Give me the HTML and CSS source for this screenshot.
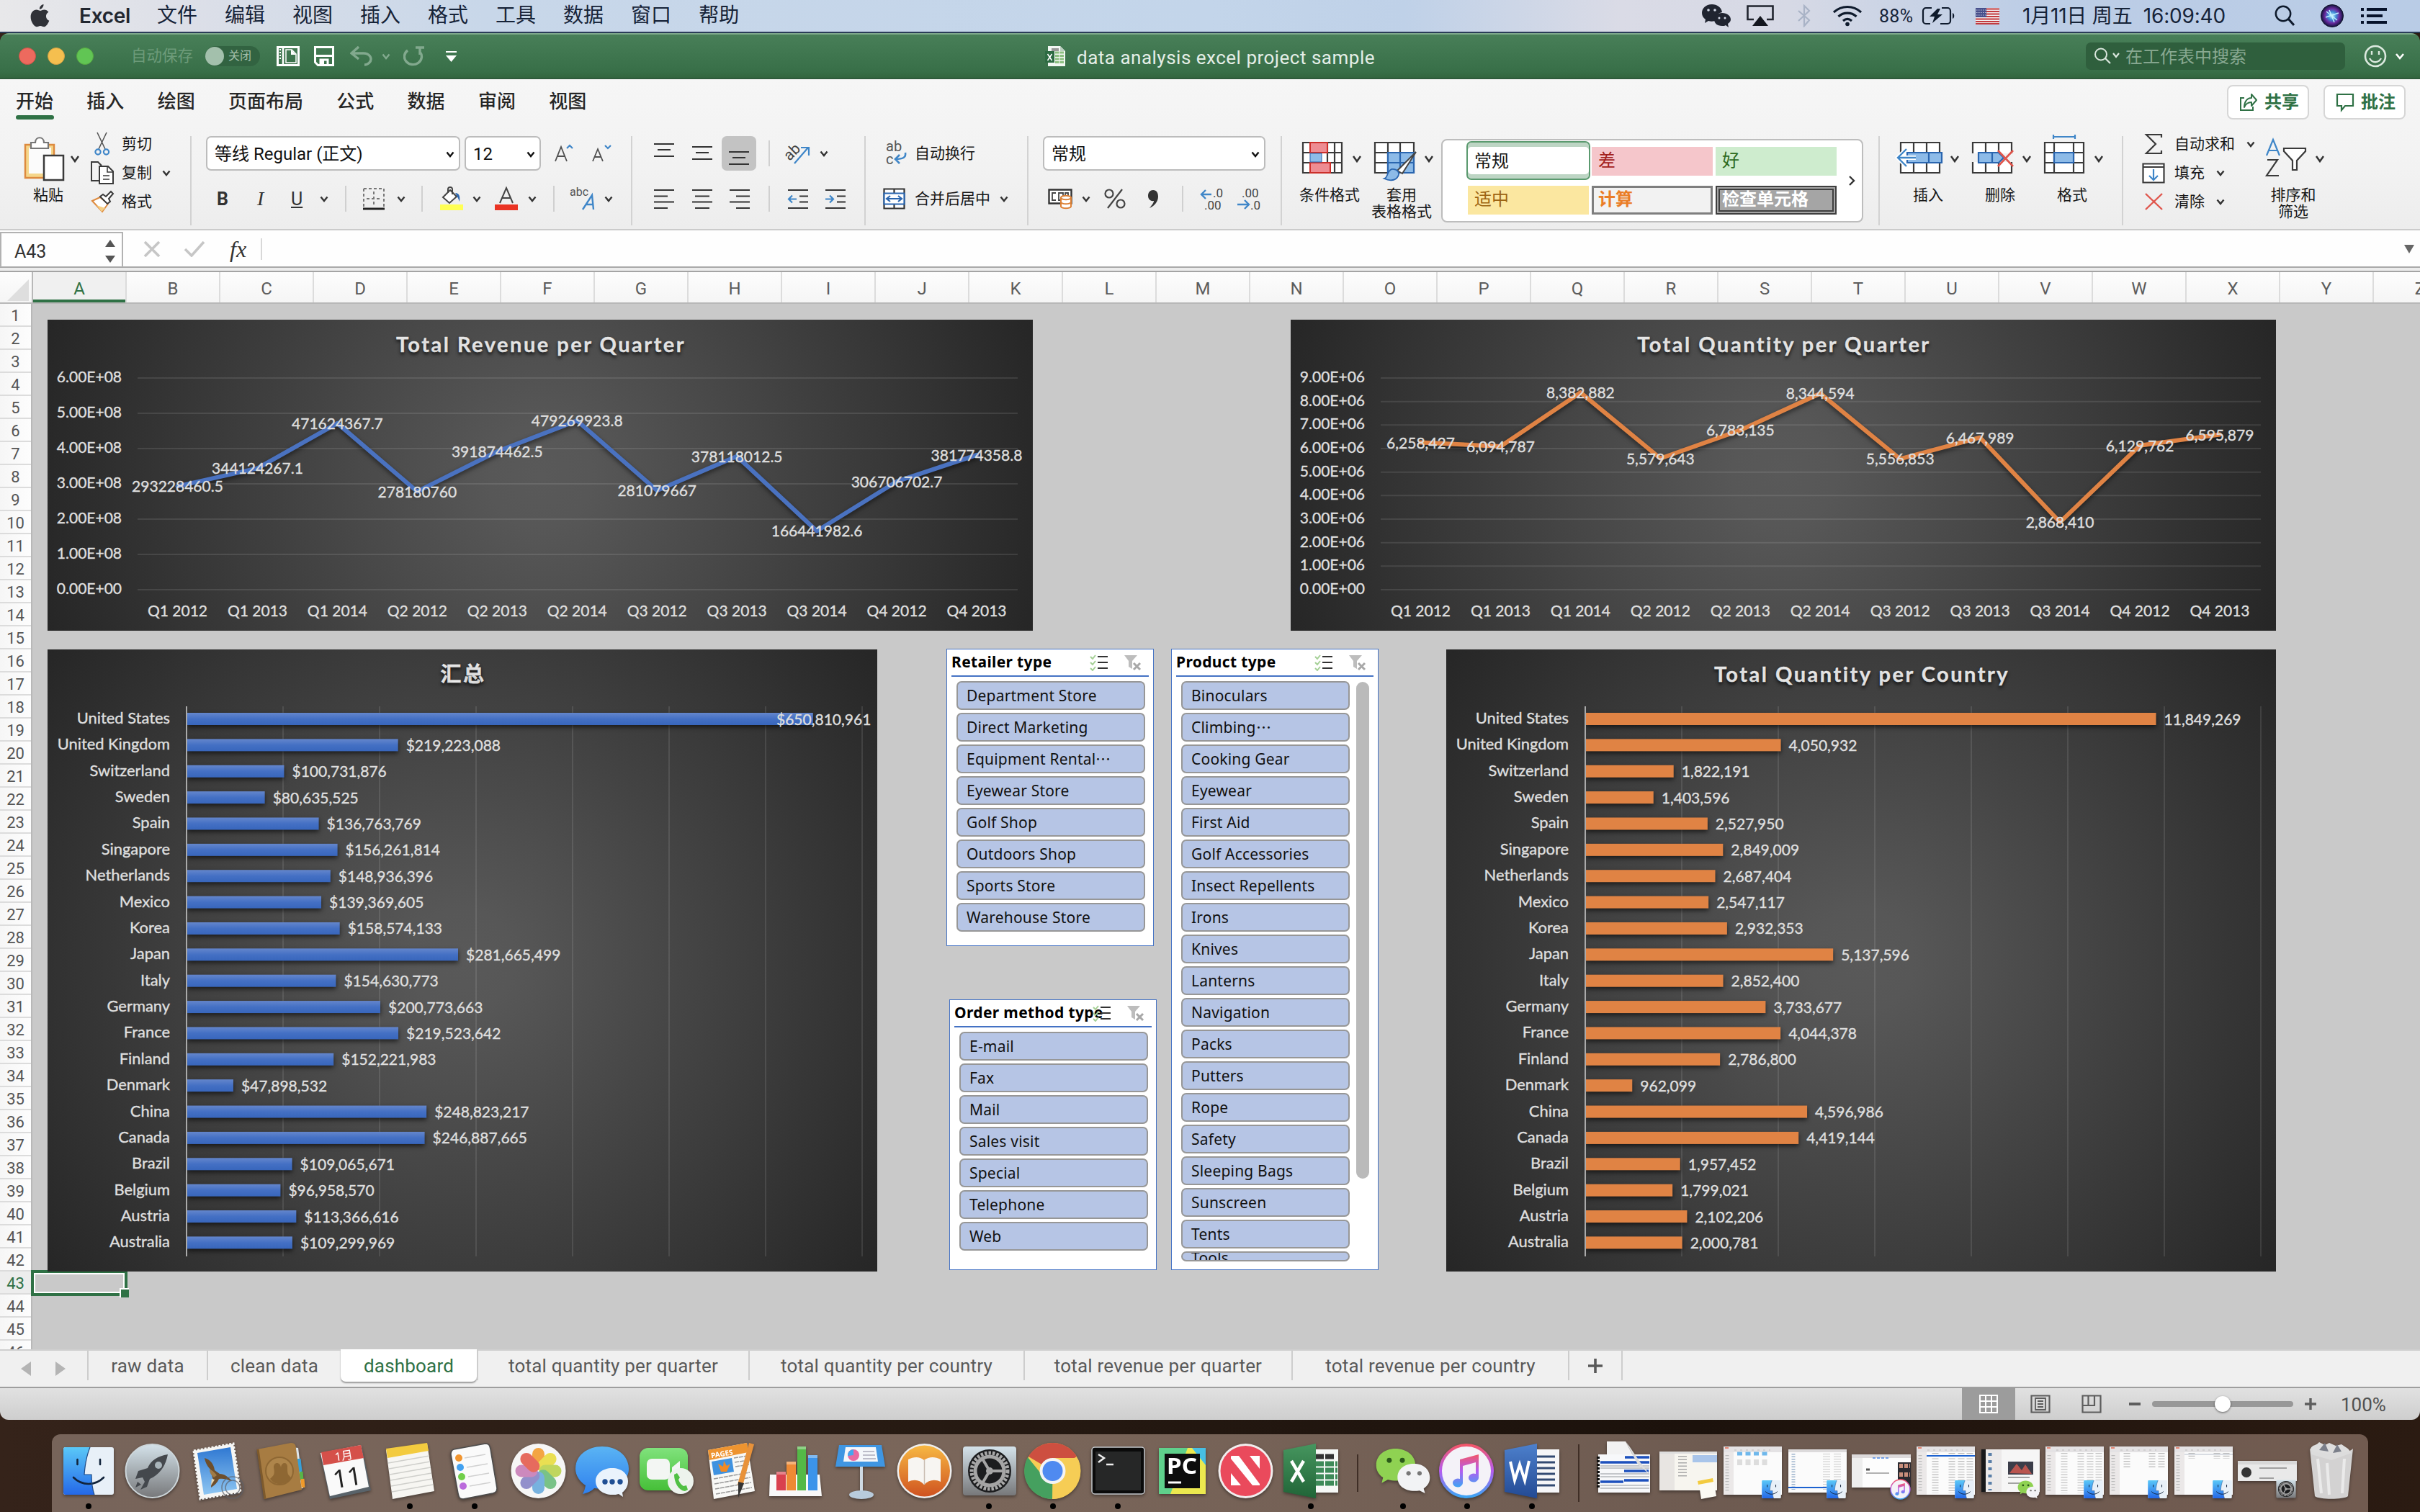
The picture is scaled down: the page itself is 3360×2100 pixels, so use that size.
FILE: index.html
```html
<!DOCTYPE html>
<html lang="zh-CN">
<head>
<meta charset="utf-8">
<title>data analysis excel project sample</title>
<link rel="stylesheet" href="styles.css">
</head>
<body>
<svg class="defs" width="0" height="0">
  <defs>
    <linearGradient id="gFinderL" x1="0" y1="0" x2="0" y2="1"><stop offset="0" stop-color="#5ac8f8"/><stop offset="1" stop-color="#2468e8"/></linearGradient>
    <linearGradient id="gSilver" x1="0" y1="0" x2="0" y2="1"><stop offset="0" stop-color="#d4e2ea"/><stop offset="1" stop-color="#77787a"/></linearGradient>
    <linearGradient id="gSky" x1="0" y1="0" x2="0" y2="1"><stop offset="0" stop-color="#2f78d2"/><stop offset="1" stop-color="#8ec6f2"/></linearGradient>
    <linearGradient id="gMsg" x1="0" y1="0" x2="0" y2="1"><stop offset="0" stop-color="#5ab4f4"/><stop offset="1" stop-color="#2f80ee"/></linearGradient>
    <linearGradient id="gGreen" x1="0" y1="0" x2="0" y2="1"><stop offset="0" stop-color="#80e27c"/><stop offset="1" stop-color="#46bf38"/></linearGradient>
    <linearGradient id="gOrange" x1="0" y1="0" x2="0" y2="1"><stop offset="0" stop-color="#f7b843"/><stop offset="1" stop-color="#cf5220"/></linearGradient>
    <linearGradient id="gNote" x1="0" y1="0" x2="0" y2="1"><stop offset="0" stop-color="#f2566a"/><stop offset=".5" stop-color="#b55cf0"/><stop offset="1" stop-color="#3ca4f4"/></linearGradient>
    <linearGradient id="gWord" x1="0" y1="0" x2="0" y2="1"><stop offset="0" stop-color="#4d80cc"/><stop offset="1" stop-color="#234a94"/></linearGradient>
    <linearGradient id="gXl" x1="0" y1="0" x2="0" y2="1"><stop offset="0" stop-color="#46965f"/><stop offset="1" stop-color="#206437"/></linearGradient>
    <radialGradient id="gSiri"><stop offset="0" stop-color="#d8f6ff"/><stop offset=".35" stop-color="#3d8fd8"/><stop offset=".65" stop-color="#6b2ba0"/><stop offset="1" stop-color="#10133c"/></radialGradient>
    <linearGradient id="gBar" x1="0" y1="0" x2="0" y2="1"><stop offset="0" stop-color="#6486cc"/><stop offset=".5" stop-color="#4470c4"/><stop offset="1" stop-color="#3866bc"/></linearGradient>
  </defs>
  <symbol id="chev" viewBox="0 0 12 9"><path d="M1.500 1.500 6 7l4.500-5.500" fill="none" stroke="currentColor" stroke-width="2.400"/></symbol>
  <symbol id="finder" viewBox="0 0 70 66">
    <rect width="70" height="66" rx="3" fill="#e8f0f8"/><path d="M3 0h34c-5 12-7 25-8 38h10c0 10 1 19 4 28H3a3 3 0 0 1-3-3V3a3 3 0 0 1 3-3z" fill="url(#gFinderL)"/>
    <path d="M19.500 17v7M51 17v7M14 42c12 12 30 12 42 0" fill="none" stroke="#12243c" stroke-width="2.600" stroke-linecap="round"/>
    <path d="M37 0c-5 12-7 25-8 38h10c0 10 1 19 4 28" fill="none" stroke="#1f4a84" stroke-width="1.200"/>
  </symbol>
  <symbol id="gear" viewBox="0 0 76 70">
    <rect x="1" y="1" width="74" height="68" rx="4" fill="url(#gSilver)"/><circle cx="38" cy="35" r="30" fill="#1c1d1f"/>
    <circle cx="38" cy="35" r="25" fill="none" stroke="#a9a9a9" stroke-width="5" stroke-dasharray="3.500 2"/><circle cx="38" cy="35" r="20" fill="none" stroke="#a5a5a5" stroke-width="5"/>
    <circle cx="38" cy="35" r="5" fill="#aaa"/><path d="M38 35H58M38 35 28 18M38 35 28 52" stroke="#a5a5a5" stroke-width="4"/>
  </symbol>
  <symbol id="itunes" viewBox="0 0 78 78">
    <circle cx="39" cy="39" r="36" fill="#f4f2f8" stroke="url(#gNote)" stroke-width="4"/>
    <path d="M30 23 56 16v33a7 6 0 1 1-4-6V27l-18 5v24a7 6 0 1 1-4-6z" fill="url(#gNote)"/>
  </symbol>
  <symbol id="wechat" viewBox="0 0 80 68">
    <path d="M29 1C13 1 1 11 1 25c0 8 4 14 10 18l-2 8 9-5c24 6 40-6 40-21C58 11 45 1 29 1z" fill="#8fd252"/><circle cx="20" cy="18" r="3.600" fill="#2b5a1a"/><circle cx="39" cy="18" r="3.600" fill="#2b5a1a"/>
    <path d="M56 23c-14 0-24 8-24 20 0 14 14 22 32 19l8 4-2-7c6-4 9-9 9-16 0-12-10-20-23-20z" fill="#f2f3f5"/><circle cx="48" cy="37" r="3.200" fill="#777"/><circle cx="64" cy="37" r="3.200" fill="#777"/>
  </symbol>
  <symbol id="listwin" viewBox="0 0 81 67">
    <rect width="81" height="67" fill="#fbfbfb"/><rect width="81" height="8" fill="#e4e2e4"/><rect y="8" width="14" height="59" fill="#ebe8e8"/>
    <path d="M2 2h5" stroke="#e0664e" stroke-width="1.500"/><path d="M15 5h50" stroke="#bbb" stroke-dasharray="3 5"/>
    <path d="M5 12v52" stroke="#bbb" stroke-width="5" stroke-dasharray="1.200 2.800"/>
  </symbol>
</svg>

<header class="menubar">
  <svg class="apple" width="27" height="32" viewBox="0 0 27 32"><path d="M18.500 0c.3 3-2.400 6.800-5.600 6.800C12.500 3.600 15.300.5 18.500 0zM13.700 8.900c1.400 0 3.200-1.500 5.700-1.500 2.300 0 4.600 1.200 6 3.400-5.100 3-4.300 9.900.9 12-1.200 3.300-4 8.400-7 8.400-2 0-2.800-1.300-5.200-1.300-2.500 0-3.400 1.300-5.300 1.300C5.400 31.200.6 24.400.6 17.600c0-6.200 3.900-10 7.900-10 2.300 0 3.900 1.300 5.200 1.300z" fill="#303238"/></svg>
  <b class="app-name">Excel</b>
  <nav class="menus"><span>文件</span><span>编辑</span><span>视图</span><span>插入</span><span>格式</span><span>工具</span><span>数据</span><span>窗口</span><span>帮助</span></nav>
  <div class="tray">
    <svg width="42" height="34" viewBox="0 0 42 34"><path d="M15 1C6 1 1 7 1 13c0 4 2 7 5 9l-1 5 5-3c3 1 6 1 9 0 0-8 5-11 10-12C28 5 22 1 15 1z" fill="#202430"/><path d="M29 13c-7 0-11 4-11 9s4 9 11 9c2 0 4 0 5-1l4 3-1-5c3-2 4-4 4-6 0-5-5-9-12-9z" fill="#202430"/><g fill="#d5dbe8"><circle cx="10" cy="9" r="1.800"/><circle cx="19" cy="9" r="1.800"/><circle cx="25" cy="20" r="1.500"/><circle cx="33" cy="20" r="1.500"/></g></svg>
    <svg width="38" height="30" viewBox="0 0 38 30"><path d="M10 20H1.500V1.500h35V20H28" fill="none" stroke="#20242e" stroke-width="2.600"/><path d="M19 15 30 29H8z" fill="#14171f"/></svg>
    <svg width="18" height="32" viewBox="0 0 18 32"><path d="M1 9l15 13-7 8V2l7 7L1 23" fill="none" stroke="#a9b3c6" stroke-width="2.200"/></svg>
    <svg width="42" height="30" viewBox="0 0 42 30"><g fill="none" stroke="#0e1a2c" stroke-width="3.200"><path d="M2 10c11-10 27-10 38 0M8.500 16c7-6.500 18-6.500 25 0M15 22c4-3.500 8-3.500 12 0"/></g><circle cx="21" cy="26.500" r="2.800" fill="#0e1a2c"/></svg>
    <span class="pct">88%</span>
    <svg width="46" height="26" viewBox="0 0 46 26"><path d="M14 2H6a4 4 0 0 0-4 4v14a4 4 0 0 0 4 4h6M28 2h8a4 4 0 0 1 4 4v14a4 4 0 0 1-4 4H26" fill="none" stroke="#0e1a2c" stroke-width="2.200"/><path d="M43 9v8c3-1 3-7 0-8zM22 3 11 14h7l-3 9L29 11h-7l4-8z" fill="#0e1a2c"/></svg>
    <svg width="33" height="23" viewBox="0 0 33 23"><path fill="#f2eeee" d="M0 0h33v23H0z"/><path d="M0 1.500h33M0 5h33M0 8.500h33M0 12h33M0 15.500h33M0 19h33M0 22h33" stroke="#c23b3f" stroke-width="1.900"/><path fill="#48508c" d="M0 0h15v13H0z"/><path d="M1 3h13M1 6.500h13M1 10h13" stroke="#c9cce0" stroke-dasharray="1.500 1.500"/></svg>
    <span class="clock">1月11日 周五&nbsp; 16:09:40</span>
    <svg width="28" height="30" viewBox="0 0 28 30"><circle cx="12" cy="12" r="10.200" fill="none" stroke="#0e1a2c" stroke-width="2.500"/><path d="m19 19 8 9" stroke="#0e1a2c" stroke-width="3"/></svg>
    <svg width="32" height="32" viewBox="0 0 32 32"><circle cx="16" cy="16" r="15.500" fill="url(#gSiri)" stroke="#101428"/><path d="M7 18l18-6M12 8l7 17M8 10l15 12" stroke="#bff2ff" stroke-width="1.500"/></svg>
    <svg width="36" height="22" viewBox="0 0 36 22"><path d="M0 2h4m4 0h28M0 11h4m4 0h22M0 20h4m4 0h28" stroke="#06122a" stroke-width="4"/></svg>
  </div>
</header>

<main class="window">
  <div class="titlebar">
    <div class="quick">
      <span class="lights"><i class="red"></i><i class="yellow"></i><i class="green"></i></span>
      <span class="autosave">自动保存</span>
      <span class="toggle"><i></i>关闭</span>
      <svg width="32" height="28" viewBox="0 0 32 28"><rect x="1.500" y="1.500" width="29" height="25" fill="none" stroke="#fff" stroke-width="3"/><path d="M9 0v28" stroke="#fff" stroke-width="2.500"/><path d="M5 4v14" stroke="#fff" stroke-width="2" stroke-dasharray="2 2"/><path d="M13 5h8l6 6v12H13z" fill="none" stroke="#fff" stroke-width="1.500"/><path d="M20 5v7h7z" fill="#fff"/></svg>
      <svg width="28" height="28" viewBox="0 0 28 28"><path d="M1.500 1.500h25v25h-21l-4-4z" fill="none" stroke="#fff" stroke-width="3"/><path d="M2 13.500h24M9 27v-8h10v8" fill="none" stroke="#fff" stroke-width="3"/><path fill="#fff" d="M9 20h5v7H9z"/></svg>
      <svg width="32" height="28" viewBox="0 0 32 28"><path d="M12 1 2 10l10 8M3 10h16c6 0 10 4 10 8s-4 8-9 8" fill="none" stroke="#82a98e" stroke-width="3.400"/></svg>
      <svg class="dim" width="12" height="9"><use href="#chev"/></svg>
      <svg width="30" height="29" viewBox="0 0 30 29"><path d="M6 6a12 11 0 1 0 17 2M17 2h12M23 2v10" fill="none" stroke="#82a98e" stroke-width="3.400"/></svg>
      <svg width="15" height="15" viewBox="0 0 15 15"><path d="M0 1h15" stroke="#fff" stroke-width="2"/><path d="M0 6h15l-7.500 9z" fill="#fff"/></svg>
    </div>
    <div class="doc">
      <svg width="29" height="30" viewBox="0 0 29 30"><path d="M4 1h17l7 7v21H4z" fill="#f2f7f3"/><path d="M21 1v7h7z" fill="#bcd0c1"/><path d="M9 4h10v4H9z" fill="#999"/><path d="M14 10h12M14 14.500h12M14 19h12M14 23.500h12" stroke="#8cbf80" stroke-width="3" stroke-dasharray="5.500 1"/><path fill="#2d6b42" d="M0 8h13v16H0z"/><path d="m3.500 12 6 9m0-9-6 9" stroke="#fff" stroke-width="1.600"/></svg>
      <span>data analysis excel project sample</span>
    </div>
    <div class="find">
      <svg width="36" height="24" viewBox="0 0 36 24"><circle cx="10" cy="9.500" r="8" fill="none" stroke="#dbe7de" stroke-width="2"/><path d="m16 15 7 7M27 8l4 5 4-5" fill="none" stroke="#dbe7de" stroke-width="2.200"/></svg>
      <span>在工作表中搜索</span>
    </div>
    <svg class="smile" width="56" height="32" viewBox="0 0 56 32"><circle cx="16" cy="16" r="14" fill="none" stroke="#dce9df" stroke-width="2.600"/><path d="M11 9v5M21 9v5M8 19c4 7 12 7 16 0" fill="none" stroke="#dce9df" stroke-width="2.400"/><path d="m45 13 5 6 5-6" fill="none" stroke="#fff" stroke-width="2.600"/></svg>
  </div>

  <section class="ribbon">
    <div class="tabs">
      <nav><span class="on">开始</span><span>插入</span><span>绘图</span><span>页面布局</span><span>公式</span><span>数据</span><span>审阅</span><span>视图</span></nav>
      <div class="share">
        <button><svg width="26" height="26" viewBox="0 0 26 26"><path d="M7 7H2v17h17v-5" fill="none" stroke="#2f7145" stroke-width="2"/><path d="M17 2l7 8-7 8v-5c-5 0-8 2-10 7 0-8 4-13 10-13z" fill="none" stroke="#2f7145" stroke-width="2" stroke-linejoin="round"/></svg><span>共享</span></button>
        <button><svg width="26" height="26" viewBox="0 0 26 26"><path d="M2 2h22v16H13l-5 6v-6H2z" fill="none" stroke="#2f7145" stroke-width="2.200"/></svg><span>批注</span></button>
      </div>
    </div>

    <div class="groups">
      <div class="group clip">
        <div class="big">
          <svg width="84" height="71" viewBox="0 0 84 71"><path d="M1 12h40v46H1z" fill="#f5d68b" stroke="#dd8a3e" stroke-width="2.500"/><path d="M6 16h31v36H6z" fill="#fbfbfb"/><path d="M9 9h6c0-9 12-9 12 0h6v8H9z" fill="#fff" stroke="#777" stroke-width="2.200"/><path d="M27 27h27v34H27z" fill="#fff" stroke="#3a3a3a" stroke-width="2.500"/><path d="m65 28 5 7 5-7" fill="none" stroke="#333" stroke-width="2.500"/></svg>
          <span>粘贴</span>
        </div>
        <div class="stack">
          <div><svg width="32" height="32" viewBox="0 0 32 32"><path d="M9 0l11 23M22 0 11 23" stroke="#555" stroke-width="1.600"/><g fill="none" stroke="#3f86c8" stroke-width="2.200"><circle cx="10" cy="27" r="3.600"/><circle cx="21.500" cy="27" r="3.600"/></g></svg><span>剪切</span></div>
          <div><svg width="32" height="32" viewBox="0 0 32 32"><path d="M11 27H1V1h9l5 5" fill="none" stroke="#3a3a3a" stroke-width="2"/><path d="M12 7h12l7 7v17H12z" fill="#fff" stroke="#3a3a3a" stroke-width="2"/><path d="M23 7v8h8M17 20h9M17 25h9" fill="none" stroke="#3a3a3a" stroke-width="1.600"/></svg><span>复制</span><svg width="12" height="9"><use href="#chev"/></svg></div>
          <div><svg width="32" height="30" viewBox="0 0 32 30"><path d="M2 14 13 9l11 9-8 11z" fill="#fff" stroke="#dd8a3e" stroke-width="2"/><path d="M8 20l12 4-5 5z" fill="#f5cf85"/><path d="M13 8l4-3 4 3 7-7 3 3-6 7 2 4-4 3z" fill="#fff" stroke="#3a3a3a" stroke-width="2"/></svg><span>格式</span></div>
        </div>
      </div>

      <div class="group font">
        <div class="row r1">
          <div class="select">等线 Regular (正文)<svg width="12" height="9"><use href="#chev"/></svg></div>
          <div class="select size">12<svg width="12" height="9"><use href="#chev"/></svg></div>
          <svg width="28" height="26" viewBox="0 0 28 26"><path d="M1 24 9 4l8 20M4 17h10" fill="none" stroke="#505050" stroke-width="1.800"/><path d="m17 6 4-4 4 4" fill="none" stroke="#3f86c8" stroke-width="2.200"/></svg>
          <svg width="28" height="26" viewBox="0 0 28 26"><path d="M1 24 8 7l7 17M4 18h8" fill="none" stroke="#505050" stroke-width="1.800"/><path d="m18 2 4 4 4-4" fill="none" stroke="#3f86c8" stroke-width="2.200"/></svg>
        </div>
        <div class="row r2">
          <b>B</b><i class="it">I</i><u>U</u><svg width="12" height="9"><use href="#chev"/></svg><i class="sep"></i>
          <svg width="30" height="31" viewBox="0 0 30 31"><path d="M1 1h28v25M1 1v25M15 5v18M5 15h21" fill="none" stroke="#777" stroke-width="2" stroke-dasharray="4 3"/><path d="M0 29h30" stroke="#222" stroke-width="3"/></svg>
          <svg width="12" height="9"><use href="#chev"/></svg><i class="sep"></i>
          <svg width="34" height="34" viewBox="0 0 34 34"><path d="M5 15 15 5l9 9-10 9zM12 9V4c0-4 6-4 6 0v7" fill="#fff" stroke="#444" stroke-width="2"/><path d="M22 9c6 0 7 5 6 12-2-5-3-7-6-12z" fill="#2b66b0"/><path fill="#ffff54" d="M1 25h32v8H1z"/></svg>
          <svg width="12" height="9"><use href="#chev"/></svg>
          <svg width="34" height="34" viewBox="0 0 34 34"><path d="M8 23 17 2l9 21M11 16h12" fill="none" stroke="#444" stroke-width="2"/><path fill="#ea3323" d="M1 25h32v8H1z"/></svg>
          <svg width="12" height="9"><use href="#chev"/></svg><i class="sep"></i>
          <svg width="34" height="36" viewBox="0 0 34 36"><text x="0" y="14" font-size="16" fill="#555">abc</text><path d="M18 33 31 13l2 20M22 26h10" fill="none" stroke="#3f86c8" stroke-width="2.400"/></svg>
          <svg width="12" height="9"><use href="#chev"/></svg>
        </div>
      </div>

      <div class="group align">
        <div class="row r1">
          <svg width="28" height="27" viewBox="0 0 28 27"><path d="M0 4h28M5 12h18M0 21h28" transform="translate(0 -4)" stroke="#333" stroke-width="2.200"/></svg>
          <svg width="28" height="27" viewBox="0 0 28 27"><path d="M0 4h28M5 12h18M0 21h28" stroke="#333" stroke-width="2.200"/></svg>
          <span class="pressed"><svg width="28" height="27" viewBox="0 0 28 27"><path d="M0 4h28M5 12h18M0 21h28" transform="translate(0 7)" stroke="#333" stroke-width="2.200"/></svg></span>
          <i class="sep"></i>
          <svg width="36" height="34" viewBox="0 0 36 34"><text x="-4" y="22" font-size="21" fill="#444" transform="rotate(-45 8 14)">ab</text><path d="M12 31 31 9M21 9h11v11" fill="none" stroke="#3f86c8" stroke-width="2.200"/></svg>
          <svg width="12" height="9"><use href="#chev"/></svg>
        </div>
        <div class="row r2">
          <svg width="28" height="27" viewBox="0 0 28 27"><path d="M0 1h28M0 9.500h19M0 17.500h28M0 26h19" stroke="#333" stroke-width="2"/></svg>
          <svg width="28" height="27" viewBox="0 0 28 27"><path d="M0 1h28M4 9.500h20M0 17.500h28M4 26h20" stroke="#333" stroke-width="2"/></svg>
          <svg width="28" height="27" viewBox="0 0 28 27"><path d="M0 1h28M9 9.500h19M0 17.500h28M9 26h19" stroke="#333" stroke-width="2"/></svg>
          <i class="sep"></i>
          <svg width="28" height="27" viewBox="0 0 28 27"><path d="M0 1h28M16 9.500h12M16 17.500h12M0 26h28" stroke="#333" stroke-width="2"/><path d="M12 13.500H1M6 8.500l-5 5 5 5" fill="none" stroke="#3f86c8" stroke-width="2.200"/></svg>
          <svg width="28" height="27" viewBox="0 0 28 27"><path d="M0 1h28M16 9.500h12M16 17.500h12M0 26h28" stroke="#333" stroke-width="2"/><path d="M0 13.500h11M6 8.500l5 5-5 5" fill="none" stroke="#3f86c8" stroke-width="2.200"/></svg>
        </div>
      </div>

      <div class="group wrap">
        <div class="row r1"><svg width="30" height="34" viewBox="0 0 30 34"><text x="0" y="14" font-size="20" fill="#555">ab</text><text x="0" y="32" font-size="20" fill="#555">c</text><path d="M27 16c1 6-2 9-14 9M19 19l-6 6 6 6" fill="none" stroke="#3f86c8" stroke-width="2.600"/></svg><span>自动换行</span></div>
        <div class="row r2"><svg width="31" height="30" viewBox="0 0 31 30"><path d="M1.500 1.500h28v27h-28zM15.500 1v6M15.500 23v6" fill="#fff" stroke="#333" stroke-width="2.200"/><path d="M1.500 7.500h28v15h-28z" fill="#fff" stroke="#2a66b0" stroke-width="2.200"/><path d="M5 15h21M10 11l-5 4 5 4M21 11l5 4-5 4" fill="none" stroke="#2a66b0" stroke-width="2.200"/></svg><span>合并后居中</span><svg width="12" height="9"><use href="#chev"/></svg></div>
      </div>

      <div class="group num">
        <div class="row r1"><div class="select">常规<svg width="12" height="9"><use href="#chev"/></svg></div></div>
        <div class="row r2">
          <svg width="34" height="28" viewBox="0 0 34 28"><path d="M1.500 1.500h31v19h-31z" fill="#fff" stroke="#333" stroke-width="2.400"/><path d="M11 6H6v10h5M15 6h6v10h-6zM24 16V6h4v4" fill="none" stroke="#444" stroke-width="1.800"/><path d="M18 12c2-3 12-3 14 0v13c-2 3-12 3-14 0z" fill="#fff" stroke="#dd8034" stroke-width="2"/><path d="M18 13c2 3 12 3 14 0M18 19c2 3 12 3 14 0" fill="none" stroke="#dd8034" stroke-width="2"/></svg>
          <svg width="12" height="9"><use href="#chev"/></svg>
          <svg width="30" height="30" viewBox="0 0 30 30"><g fill="none" stroke="#444" stroke-width="2.200"><circle cx="7" cy="8" r="5.500"/><circle cx="23" cy="22" r="5.500"/><path d="M25 2 5 28"/></g></svg>
          <svg width="16" height="27" viewBox="0 0 16 27"><path d="M7 1c5 0 7 4 7 9 0 7-5 13-12 16 4-5 6-8 6-10C3 17 0 13 0 9c0-5 3-8 7-8z" fill="#333"/></svg>
          <i class="sep"></i>
          <svg width="32" height="32" viewBox="0 0 32 32"><text x="18" y="14" font-size="17" fill="#444">.0</text><text x="6" y="31" font-size="17" fill="#444">.00</text><path d="M16 10H2M8 4l-6 6 6 6" fill="none" stroke="#3f86c8" stroke-width="2.400"/></svg>
          <svg width="32" height="32" viewBox="0 0 32 32"><text x="6" y="14" font-size="17" fill="#444">.00</text><text x="18" y="31" font-size="17" fill="#444">.0</text><path d="M0 24h15M10 18l6 6-6 6" fill="none" stroke="#3f86c8" stroke-width="2.400"/></svg>
        </div>
      </div>

      <div class="group styles">
        <div class="big w100"><svg width="100" height="71" viewBox="0 0 100 71"><path d="M13 9h54v42H13zM24 9v42M47 9v42M57 9v42M13 23h54M13 37h54" fill="#fff" stroke="#3a3a3a" stroke-width="2.200"/><path d="M23 9h24v14H23zM23 37h28v14H23z" fill="#ee8c92" stroke="#cc2f2a" stroke-width="2"/><path d="M23 24h16v12H23z" fill="#8dbbe8" stroke="#2a66b0"/><path d="m83 28 5 7 5-7" fill="none" stroke="#333" stroke-width="2.500"/></svg><span>条件格式</span></div>
        <div class="big w100"><svg width="100" height="71" viewBox="0 0 100 71"><path d="M13 9h54v42H13zM31 9v42M48 9v42M13 23h54M13 37h54" fill="#fff" stroke="#3a3a3a" stroke-width="2.200"/><path d="M31 23h36v28H31zM48 23v28M31 37h36" fill="#8dbbe8" stroke="#2a66b0" stroke-width="2.200"/><path d="M70 22 44 48l7 4z" fill="#fff" stroke="#444" stroke-width="2"/><path d="M26 59c5-1 3-9 10-13 8-1 12 5 9 10-4 7-13 6-19 3z" fill="#8dbbe8" stroke="#2a66b0" stroke-width="1.800"/><path d="m83 28 5 7 5-7" fill="none" stroke="#333" stroke-width="2.500"/></svg><span>套用<br>表格格式</span></div>
        <div class="gallery">
          <div class="cells"><span class="normal">常规</span><span class="bad">差</span><span class="good">好</span><span class="neutral">适中</span><span class="calc">计算</span><span class="check">检查单元格</span></div>
          <svg width="10" height="14" viewBox="0 0 10 14"><path d="m2 1 6 6-6 6" fill="none" stroke="#333" stroke-width="2.400"/></svg>
        </div>
      </div>

      <div class="group cellops">
        <div class="big"><svg width="90" height="71" viewBox="0 0 90 71"><path d="M7 9h54v42H7zM25 9v42M43 9v42" fill="#fff" stroke="#3a3a3a" stroke-width="2.200"/><path d="M16 23h48v14H16zM46 23v14" fill="#8dbbe8" stroke="#2a66b0" stroke-width="2.200"/><path d="M28 30H3M15 18 3 30l12 12" fill="none" stroke="#fff" stroke-width="6"/><path d="M28 30H3M15 18 3 30l12 12" fill="none" stroke="#3f86c8" stroke-width="2.400"/><path d="m77 28 5 7 5-7" fill="none" stroke="#333" stroke-width="2.500"/></svg><span>插入</span></div>
        <div class="big"><svg width="90" height="71" viewBox="0 0 90 71"><path d="M7 9h54v42H7zM25 9v42M43 9v42" fill="#fff" stroke="#3a3a3a" stroke-width="2.200"/><path d="M5 24h58v12H5z" fill="#f1f1f1"/><path d="M15 23h28l7 7-7 7H15zM34 23v14" fill="#8dbbe8" stroke="#2a66b0" stroke-width="2.200"/><path d="m42 20 21 22M63 20 42 42" stroke="#e0554c" stroke-width="2.600"/><path d="m77 28 5 7 5-7" fill="none" stroke="#333" stroke-width="2.500"/></svg><span>删除</span></div>
        <div class="big"><svg width="90" height="71" viewBox="0 0 90 71"><path d="M7 9h54v42H7zM20 9v42M47 9v42M7 23h54M7 37h54" fill="#fff" stroke="#3a3a3a" stroke-width="2.200"/><path d="M20 23h27v14H20z" fill="#8dbbe8" stroke="#2a66b0" stroke-width="2.200"/><path d="M19 1h30M19-2v6M49-2v6" stroke="#3f86c8" stroke-width="2.200"/><path d="m77 28 5 7 5-7" fill="none" stroke="#333" stroke-width="2.500"/></svg><span>格式</span></div>
      </div>

      <div class="group edit">
        <div class="stack">
          <div><svg width="32" height="30" viewBox="0 0 32 30"><path d="M27 6V2H6l13 13L6 28h21v-4" fill="none" stroke="#3a3a3a" stroke-width="2.200"/></svg><span>自动求和</span><svg width="12" height="9"><use href="#chev"/></svg></div>
          <div><svg width="32" height="29" viewBox="0 0 32 29"><path d="M1.500 1.500h29v26h-29zM1 6h30" fill="#fff" stroke="#3a3a3a" stroke-width="2.200"/><path d="M16 9v15M10 18l6 6 6-6" fill="none" stroke="#3f86c8" stroke-width="2.200"/></svg><span>填充</span><svg width="12" height="9"><use href="#chev"/></svg></div>
          <div><svg width="32" height="26" viewBox="0 0 32 26"><path d="m5 2 23 22M28 2 5 24" stroke="#e0554c" stroke-width="2.400"/></svg><span>清除</span><svg width="12" height="9"><use href="#chev"/></svg></div>
        </div>
        <div class="big"><svg width="90" height="71" viewBox="0 0 90 71"><path d="M8 27 17 5l9 22M11 20h12" fill="none" stroke="#3f86c8" stroke-width="2.200"/><path d="M9 33h14L8 55h17" fill="none" stroke="#3a3a3a" stroke-width="2.200"/><path d="M32 17h30v4L50 34v13h-6V34L32 21z" fill="#fff" stroke="#3a3a3a" stroke-width="2.200"/><path d="m77 28 5 7 5-7" fill="none" stroke="#333" stroke-width="2.500"/></svg><span>排序和<br>筛选</span></div>
      </div>
    </div>
  </section>

  <div class="formula">
    <div class="namebox">A43<svg width="16" height="34" viewBox="0 0 16 34"><path d="M1 11 8 1l7 10zM1 23h14L8 33z" fill="#555"/></svg></div>
    <svg width="24" height="22" viewBox="0 0 24 22"><path d="m2 1 20 20M22 1 2 21" stroke="#c6c6c6" stroke-width="3.600"/></svg>
    <svg width="30" height="22" viewBox="0 0 30 22"><path d="m2 11 9 9L28 1" fill="none" stroke="#c6c6c6" stroke-width="3.600"/></svg>
    <i class="fx">fx</i><i class="bar"></i>
    <svg class="drop" width="14" height="12" viewBox="0 0 14 12"><path d="M0 0h14L7 12z" fill="#666"/></svg>
  </div>

  <div class="colheads" id="cols"><span class="corner"><svg width="30" height="30" viewBox="0 0 30 30"><path d="M30 0v30H0z" fill="#dedede"/></svg></span></div>

  <div class="sheet">
    <div class="rowheads" id="rows"></div>
    <div class="canvas" id="canvas">
      <div class="cursor"></div>
      <svg class="chart" id="revQuarter" width="1368" height="432"></svg>
      <svg class="chart" id="qtyQuarter" width="1368" height="432"></svg>
      <svg class="chart" id="revCountry" width="1152" height="864"></svg>
      <svg class="chart" id="qtyCountry" width="1152" height="864"></svg>
      <section class="slicer" id="retailer"></section>
      <section class="slicer" id="order"></section>
      <section class="slicer" id="product"></section>
    </div>
  </div>

  <div class="sheettabs">
    <svg class="arrows" width="62" height="20" viewBox="0 0 62 20"><path d="M14 0v20L0 10zM48 0v20l14-10z" fill="#b4b4b4"/></svg>
    <span style="width:166px">raw data</span><span style="width:186px">clean data</span><span class="on" style="width:189px">dashboard</span><span style="width:377px">total quantity per quarter</span><span style="width:382px">total quantity per country</span><span style="width:372px">total revenue per quarter</span><span style="width:384px">total revenue per country</span>
    <span style="width:76px"><svg width="20" height="20" viewBox="0 0 20 20"><path d="M10 0v20M0 10h20" stroke="#595959" stroke-width="3.600"/></svg></span>
  </div>

  <footer class="status">
    <span class="view on"><svg width="26" height="26" viewBox="0 0 26 26"><path d="M1 1h24v24H1zM9 1v24M17 1v24M1 9h24M1 17h24" fill="none" stroke="#fff" stroke-width="2"/></svg></span>
    <svg width="28" height="26" viewBox="0 0 28 26"><path d="M1.500 1.500h25v23h-25z" fill="none" stroke="#5d5d5d" stroke-width="2.200"/><path d="M7 5h14v16H7zM10 9h8M10 13h8M10 17h8" fill="none" stroke="#5d5d5d" stroke-width="1.800"/></svg>
    <svg width="28" height="26" viewBox="0 0 28 26"><path d="M1.500 1.500h25v23h-25zM1 15h17V1M9.500 1v14" fill="none" stroke="#5d5d5d" stroke-width="2.200"/></svg>
    <i class="minus"></i><span class="zoom"><i></i></span>
    <svg width="16" height="16" viewBox="0 0 16 16"><path d="M8 0v16M0 8h16" stroke="#5d5d5d" stroke-width="3.400"/></svg>
    <span class="pct">100%</span>
  </footer>
</main>

<div class="dock">
  <div class="app run"><svg viewBox="0 0 89 108"><use href="#finder" x="10" y="18" width="70" height="66"/></svg></div>
  <div class="app"><svg viewBox="0 0 89 108"><circle cx="44.500" cy="51" r="37" fill="url(#gSilver)" stroke="#cdd6da" stroke-width="2"/><path d="M66 28c-14 2-24 9-28 19l-13 4-4 11 10-2 3 6-6 11 9-4 4-11c14-6 22-18 25-34zM24 66l-3 8 8-4z" fill="#44484d"/><circle cx="53" cy="43" r="5" fill="#a8b4ba"/></svg></div>
  <div class="app"><svg viewBox="0 0 89 108"><path d="M12 23 67 13l10 67-56 10z" fill="#f6f6f4" stroke="#f6f6f4" stroke-width="3" stroke-dasharray="3 2"/><path d="m17 26 46-8 9 58-46 8z" fill="url(#gSky)"/><path d="M27 33c9 3 13 9 14 17l7 5c6 0 12 4 17 10-8-3-13-4-18-3-2 5-6 9-11 12 0-4 1-8 3-11-2-5-3-9-2-12-5-5-9-11-10-18z" fill="#6e4f2c"/><path d="M34 49c4 1 7 4 10 8l-4 3c-4-3-6-7-6-11z" fill="#a07b46"/><path d="M37 62l4 1-5 8z" fill="#e9d9b4"/><circle cx="66" cy="74" r="15" fill="none" stroke="#5c5f68" stroke-width="1.500" opacity=".7"/><circle cx="66" cy="74" r="10" fill="none" stroke="#5c5f68" stroke-width="1.500" opacity=".7"/></svg></div>
  <div class="app"><svg viewBox="0 0 89 108"><path d="M60 18l8 1 7 56-10 1z" fill="#dfe6ea"/><path d="M69 34l2 18" stroke="#38a0d8" stroke-width="5"/><path d="M72 52l1 12" stroke="#58b548" stroke-width="5"/><path d="M74 62l1 12" stroke="#f09a2a" stroke-width="5"/><path d="M11 21 58 12c6 0 7 4 7 8l8 57-52 13z" fill="#a77c42"/><path d="M12 21 22 90" stroke="#7e5a2c" stroke-width="3"/><circle cx="42" cy="51" r="19" fill="#ae854b" stroke="#8e6733" stroke-width="2"/><path d="M29 62c5-5 7-6 5-16 0-8 9-8 10 0 1-8 10-8 9 1 0 9 1 9 5 13-7 12-22 12-29 2z" fill="#8e6733"/></svg></div>
  <div class="app"><svg viewBox="0 0 89 108"><path d="M10 30 68 20l12 58-57 12z" fill="#59636a"/><path d="M10 26 66 15l11 58-54 13z" fill="#fafafa"/><path d="M11 25 66 15l4 18-56 10z" fill="#d5504a"/><text x="30" y="36" font-size="16" fill="#fff" transform="rotate(-9 40 32)">1月</text><text x="27" y="73" font-size="35" fill="#222" transform="rotate(-9 44 60)">11</text></svg></div>
  <div class="app run"><svg viewBox="0 0 89 108"><path d="m12 22 57-9 10 66-58 11z" fill="#f7f6f2"/><path d="m12 20 57-8 2 11-57 10z" fill="#f3cb3f"/><path d="m15 40 57-10M16 48l57-10M17 56l57-10M18 64l57-10M19 72l57-10M20 80l57-10" stroke="#cfcfcb" stroke-width="1.500"/></svg></div>
  <div class="app run"><svg viewBox="0 0 89 108"><path d="M16 21 60 13c6 0 6 4 7 8l9 54c0 5-3 6-6 7l-41 8c-5 0-6-3-7-8l-10-54c0-4 1-6 4-7z" fill="#fafafa" stroke="#4c4c4c" stroke-width="1.500"/><path d="m31 33 29-5M34 46l29-5M36 59l29-5M38 72l29-5" stroke="#d0d0d0" stroke-width="1.500"/><circle cx="23" cy="33" r="5" fill="#f1952f"/><circle cx="25" cy="46" r="5" fill="#43a1f0"/><circle cx="27" cy="59" r="5" fill="#71cf4a"/><circle cx="29" cy="72" r="5" fill="#bb6bdc"/></svg></div>
  <div class="app"><svg viewBox="0 0 89 108"><circle cx="44.500" cy="51" r="38" fill="#f6f6f6"/><g opacity=".88"><rect x="36" y="19" width="17" height="31" rx="8.500" fill="#f39a2b"/><rect x="36" y="19" width="17" height="31" rx="8.500" fill="#e9dc3c" transform="rotate(45 44.500 51)"/><rect x="36" y="19" width="17" height="31" rx="8.500" fill="#b9d24a" transform="rotate(90 44.500 51)"/><rect x="36" y="19" width="17" height="31" rx="8.500" fill="#68bb78" transform="rotate(135 44.500 51)"/><rect x="36" y="19" width="17" height="31" rx="8.500" fill="#66a9dc" transform="rotate(180 44.500 51)"/><rect x="36" y="19" width="17" height="31" rx="8.500" fill="#8583c6" transform="rotate(225 44.500 51)"/><rect x="36" y="19" width="17" height="31" rx="8.500" fill="#c77bb6" transform="rotate(270 44.500 51)"/><rect x="36" y="19" width="17" height="31" rx="8.500" fill="#e4584a" transform="rotate(315 44.500 51)"/></g></svg></div>
  <div class="app"><svg viewBox="0 0 89 108"><path d="M44 17C23 17 7 30 7 48c0 9 6 18 14 23-1 6-2 8-4 12 8-2 12-4 16-8 29 4 48-9 48-27S65 17 44 17z" fill="url(#gMsg)"/><path d="M58 47c-13 0-23 8-23 18 0 11 10 19 23 19 4 0 6 0 9-1l6 4-1-6c5-4 8-9 8-16 0-10-9-18-22-18z" fill="#eaf3fc"/><g fill="#1f4f94"><circle cx="48" cy="66" r="3.700"/><circle cx="58" cy="66" r="3.700"/><circle cx="69" cy="66" r="3.700"/></g></svg></div>
  <div class="app"><svg viewBox="0 0 89 108"><rect x="6" y="19" width="67" height="59" rx="12" fill="url(#gGreen)"/><rect x="16" y="34" width="32" height="29" rx="7" fill="#f3f6f3"/><path d="m51 46 11-9v22l-11-6z" fill="#f3f6f3"/><circle cx="63" cy="65" r="18" fill="#edf3ed"/><path d="M54 56l4-2 4 6-2 3c2 5 4 7 7 9l4-1 2 6-4 2c-9-1-15-12-15-23z" fill="#50c043"/></svg></div>
  <div class="app"><svg viewBox="0 0 89 108"><path d="M12 22 66 12l11 67-57 11z" fill="#f8f8f6"/><path d="m12 22 54-10 2 13-54 11z" fill="#ee9430"/><text x="16" y="31" font-size="10" font-weight="bold" fill="#fff" transform="rotate(-9 30 28)">PAGES</text><path d="m17 38 28-5 3 19-28 5z" fill="#3f92e0"/><path d="M30 52l-4-11 7 4 1-8 4 7 5-3-5 11z" fill="#f28a24"/><path d="m48 33 19-3M49 39l19-3M50 45l19-3M20 62l50-9M21 69l50-9M22 76l50-9M23 83l50-9" stroke="#999" stroke-width="1.500" stroke-dasharray="6 1"/><path d="m69 12 7 2-16 58-7-2z" fill="#e8923a"/><path d="m54 66 8 2-8 20z" fill="#333"/></svg></div>
  <div class="app"><svg viewBox="0 0 89 108"><path d="M9 56h69l3 30H8z" fill="#f8f8f8"/><path d="M18 52h13v26H18z" fill="#d9414e"/><path d="M32 38h13v40H32z" fill="#ee8a34"/><path d="M47 17h12v61H47z" fill="#54b947"/><path d="M62 29h13v49H62z" fill="#3c94ea"/><path d="M18 52h13v4H18zM32 38h13v4H32zM47 17h12v4H47zM62 29h13v4H62z" fill="#fff" opacity=".35"/></svg></div>
  <div class="app"><svg viewBox="0 0 89 108"><path d="M15 15h59l5 30H10z" fill="#3f96e2"/><path d="M24 18h42l3 20H21z" fill="#f4f7fa"/><circle cx="35" cy="29" r="8" fill="#e86aa0"/><path d="M35 29V21a8 8 0 0 0-8 9z" fill="#45a6ee"/><path d="M48 24h16M48 29h17M48 34h18" stroke="#aab" stroke-width="1.500"/><path d="M44 45h4v40h-4z" fill="#cfdbe4"/><ellipse cx="46" cy="84" rx="17" ry="6" fill="#b8cbdc"/></svg></div>
  <div class="app"><svg viewBox="0 0 89 108"><circle cx="44.500" cy="51" r="38" fill="#eee"/><circle cx="44.500" cy="51" r="35.500" fill="url(#gOrange)"/><path d="M44 36c-6-5-14-5-22-1v31c8-4 16-3 22 4 7-7 15-8 23-4V35c-8-4-16-4-23 1z" fill="#f7f5f2"/><path d="M44.500 36v34" stroke="#c9bdb2" stroke-width="1.500"/></svg></div>
  <div class="app run"><svg viewBox="0 0 89 108"><use href="#gear" x="8" y="16" width="76" height="70"/></svg></div>
  <div class="app run"><svg viewBox="0 0 89 108"><circle cx="44.500" cy="51" r="39" fill="#f6cd55"/><path d="M44.500 51 11 31a39 39 0 0 1 67 0z" fill="#cd4f40"/><path d="M10 32a39 39 0 0 0 34 58l17-29-30-3z" fill="#45a05f"/><path d="M44.500 51V33h34A39 39 0 0 1 44 90z" fill="#f6cd55"/><circle cx="44.500" cy="51" r="18" fill="#f4f4f4"/><circle cx="44.500" cy="51" r="14" fill="#4f8af0"/></svg></div>
  <div class="app run"><svg viewBox="0 0 89 108"><rect x="9" y="18" width="73" height="65" rx="4" fill="#0a0a0a" stroke="#c4c8cc" stroke-width="1.500"/><path d="M14 24h63v54H14z" fill="#262727"/><path d="m18 28 8 5-8 6M29 42h10" fill="none" stroke="#eee" stroke-width="2.500"/></svg></div>
  <div class="app"><svg viewBox="0 0 89 108"><path d="M13 19h65v64H13z" fill="#ece94f"/><path d="M13 19h40L29 83H13z" fill="#5fd18c"/><path d="M59 19h19v24z" fill="#47bfe4"/><path d="M21 27h49v48H21z" fill="#0d0d0d"/><text x="24" y="55" font-size="30" font-weight="bold" fill="#fff" textLength="42" lengthAdjust="spacingAndGlyphs">PC</text><path d="M26 67h18" stroke="#fff" stroke-width="3"/></svg></div>
  <div class="app"><svg viewBox="0 0 89 108"><circle cx="44.500" cy="51" r="38" fill="#f1eeee"/><circle cx="44.500" cy="51" r="35" fill="#ea4a5c"/><path d="M24 31c0-1 1-1 2-1h9l29 39v2h-10L24 34zM50 30h14v18zM24 54v17h14z" fill="#fff"/></svg></div>
  <div class="app run"><svg viewBox="0 0 89 108"><path d="M47 21h36v60H47z" fill="#f6f8f6"/><path d="M51 41h31M51 50h31M51 59h31M51 68h31" stroke="#3d8a58" stroke-width="7" stroke-dasharray="12 2"/><path d="M51 31h28" stroke="#333" stroke-width="7" stroke-dasharray="12 2"/><path d="M7 22 52 13v76L7 80z" fill="url(#gXl)"/><path d="m18 37 17 29M35 37 18 66" stroke="#fff" stroke-width="4.500"/></svg></div>
  <i class="rule short"></i>
  <div class="app run"><svg viewBox="0 0 89 108"><use href="#wechat" x="5" y="19" width="80" height="65"/></svg></div>
  <div class="app run"><svg viewBox="0 0 89 108"><use href="#itunes" x="5" y="12" width="78" height="78"/></svg></div>
  <div class="app run"><svg viewBox="0 0 89 108"><path d="M47 21h36v60H47z" fill="#f6f6f8"/><path d="M50 31h27M50 39h27M50 47h27M50 55h27M50 63h27M50 71h27" stroke="#334a72" stroke-width="3"/><path d="M7 22 52 13v76L7 80z" fill="url(#gWord)"/><path d="m15 38 6 26 7-22 7 22 6-27" fill="none" stroke="#fff" stroke-width="4"/></svg></div>
  <i class="rule"></i>
  <div class="app"><svg viewBox="0 0 89 108"><path d="M20 10h26l18 34H20z" fill="#f2f2f2"/><path d="M8 28h72v53H8z" fill="#f7f8fa"/><path d="M8 31v45" stroke="#111" stroke-width="4" stroke-dasharray="3 2"/><path d="M11 39h68M45 32h34M11 66h32M44 51h34M44 64h34" stroke="#1d50bd" stroke-width="3.500"/><path d="M11 44h68M11 47h68M11 55h68M11 59h68M11 71h68M11 75h68" stroke="#b4b6bc" stroke-width="1.600"/><path d="M46 10c8 9 18 28 34 46l-17-14z" fill="#dcdcdc"/></svg></div>
  <div class="app"><svg viewBox="0 0 89 108"><path d="M4 24h80v54H4z" fill="#f7f5ef"/><path d="M4 24h80v3H4z" fill="#ddd"/><path d="M4 27h21v51H4z" fill="#e8e5e2"/><path d="M50 29h34v10H50z" fill="#a9c5ea"/><path d="M36 30v30" stroke="#aaa" stroke-width="12" stroke-dasharray="1.500 3"/><path d="m58 64 21-3 4 25-21 4z" fill="#fbfaf4"/><path d="m57 65 21-4 1 5-21 4z" fill="#f3cb3f"/></svg></div>
  <div class="app"><svg viewBox="0 0 89 108"><use href="#listwin" x="4" y="17" width="81" height="67"/><path d="M23 27h44" stroke="#6fb8ec" stroke-width="5" stroke-dasharray="7 4.500"/><path d="M23 39h44" stroke="#ddd" stroke-width="8" stroke-dasharray="7 4.500"/><use href="#finder" x="57" y="64" width="27" height="25"/></svg></div>
  <div class="app"><svg viewBox="0 0 89 108"><path d="M4 21h81v60H4z" fill="#fbfbfb"/><path d="M4 21h81v4H4z" fill="#dcdadb"/><path d="M11 27v50" stroke="#9db4cc" stroke-width="5" stroke-dasharray="1.500 2"/><path d="M57 27v50M72 27v50" stroke="#ccc" stroke-width="10" stroke-dasharray="1 2.500"/><path d="M4 74h55" stroke="#1d62d0" stroke-width="2"/><use href="#finder" x="57" y="64" width="27" height="25"/></svg></div>
  <div class="app"><svg viewBox="0 0 89 108"><path d="M3 28h82v46H3z" fill="#fdfdfd"/><path d="M3 28h82v5H3z" fill="#dddadb"/><path d="M3 33h15v41H3z" fill="#eee"/><path d="M32 33h24" stroke="#4a86e8" stroke-width="1.500" stroke-dasharray="4 2"/><path d="M23 49h5" stroke="#555" stroke-width="3"/><path d="M23 54h32" stroke="#999" stroke-width="1.500"/><path d="M67 39h18v35H67z" fill="#2b2a30"/><path d="M69 44h15M69 56h15" stroke="#c98f7c" stroke-width="6" stroke-dasharray="5 2"/><use href="#itunes" x="56" y="62" width="29" height="29"/></svg></div>
  <div class="app"><svg viewBox="0 0 89 108"><use href="#listwin" x="4" y="17" width="81" height="67"/><path d="M30 26v56M53 26v56M66 26v56M78 26v56" stroke="#bbb" stroke-width="9" stroke-dasharray="1.200 2.500"/><path d="M18 30h67" stroke="#1d62d0" stroke-width="2"/><use href="#finder" x="57" y="64" width="27" height="25"/></svg></div>
  <div class="app"><svg viewBox="0 0 89 108"><path d="M4 21h81v59H4z" fill="#f6f6f6"/><path d="M4 21h6v59H4z" fill="#17181a"/><path d="M10 21h22v59H10z" fill="#eceaea"/><path d="M16 26v52" stroke="#5a7fa8" stroke-width="5" stroke-dasharray="4 6"/><path d="M41 38h35v18H41z" fill="#3b3d49"/><path d="m43 54 10-13 7 9 5-8 9 13z" fill="#b9544e"/><path d="M41 60h30M41 68h20" stroke="#888" stroke-width="1.500"/><use href="#wechat" x="54" y="64" width="31" height="26"/></svg></div>
  <div class="app"><svg viewBox="0 0 89 108"><use href="#listwin" x="4" y="17" width="81" height="67"/><path d="M30 26v56M53 26v56M66 26v56M78 26v56" stroke="#c4c4c4" stroke-width="9" stroke-dasharray="1.200 2.500"/><use href="#finder" x="57" y="64" width="27" height="25"/></svg></div>
  <div class="app"><svg viewBox="0 0 89 108"><use href="#listwin" x="4" y="17" width="81" height="67"/><path d="M28 26v20M63 26v20M76 26v20" stroke="#bbb" stroke-width="9" stroke-dasharray="1.200 2.500"/><use href="#finder" x="57" y="64" width="27" height="25"/></svg></div>
  <div class="app"><svg viewBox="0 0 89 108"><use href="#listwin" x="4" y="17" width="81" height="67"/><path d="M28 26v8M63 26v8M76 26v8" stroke="#bbb" stroke-width="9" stroke-dasharray="1.200 2.500"/><path d="M18 28h67" stroke="#d8dce2" stroke-width="2"/><use href="#finder" x="57" y="64" width="27" height="25"/></svg></div>
  <div class="app"><svg viewBox="0 0 89 108"><path d="M3 37h82v28H3z" fill="#e9e9e9"/><path d="M3 37h82v5H3z" fill="#d8d8d8"/><circle cx="15" cy="53" r="7" fill="#333"/><path d="M33 47h38M33 61h20" stroke="#888" stroke-width="1.500"/><use href="#gear" x="56" y="63" width="28" height="26"/></svg></div>
  <div class="app"><svg viewBox="0 0 89 108"><path d="M15 20c3-6 8-4 12-9l8 4 6-3 9 4 8-2 9 6 5 6-28 10-28-8z" fill="#dedede"/><path d="m27 22 8-10 5 12zM46 26l6-12 6 10z" fill="#7b7f8a"/><path d="M14 20c8 9 52 9 60 0l-7 66c-6 5-40 5-46 0z" fill="#dcdcdc" opacity=".94"/><path d="M25 34l5 48M62 34l-3 48M38 40l3 44" stroke="#f4f4f4" stroke-width="4" opacity=".7"/></svg></div>
</div>
<script src="app.js"></script>
</body>
</html>
```
FILE: styles.css
```css
* { box-sizing: border-box; }
html, body { margin: 0; height: 100%; }
body {
  width: 3360px; height: 2100px; overflow: hidden;
  display: flex; flex-direction: column;
  background: linear-gradient(90deg, #35231a, #291c14 30%, #1c120c 70%, #2b1b12);
  font-family: Roboto, "Noto Sans CJK SC", sans-serif;
  color: #222; line-height: 1;
}
svg { display: block; flex: none; }
svg.defs { position: absolute; }
.ribbon svg { overflow: visible; }

/* system menu bar */
.menubar {
  height: 46px; flex: none; display: flex; align-items: center; padding: 0 46px 0 42px;
  border-bottom: 2px solid #2a3c58;
  background: linear-gradient(90deg, #e8e8ea, #dcdfe8 8%, #c8d7e9 20%, #c3d5ea 50%, #bfd1e8 58%, #dadbe6 67%, #d6d9e5 74%, #bccde6 84%, #b9cce6);
  font-size: 28px; color: #162338;
}
.app-name { font: 600 28px Inter; margin-left: 41px; width: 108px; color: #222730; letter-spacing: -.3px; }
.menus { display: flex; gap: 38px; }
.tray {
  margin-left: auto; display: grid; align-items: center; white-space: nowrap;
  grid-template-columns: 63px 71px 48px 65px 59px 75px 65px 350px 64px 56px 36px;
}
.tray .pct { font-size: 25px; letter-spacing: .3px; }
.clock { font-size: 28px; font-family: Inter, "Noto Sans CJK SC", sans-serif; letter-spacing: -.2px; }

/* window */
.window { height: 1926px; flex: none; display: flex; flex-direction: column; border-radius: 12px; overflow: hidden; }
.titlebar {
  height: 64px; flex: none; display: flex; align-items: center; padding-right: 22px;
  background: linear-gradient(#487f58, #386f48 85%, #33663f); border-top: 2px solid #7fa98c; border-bottom: 2px solid #2e5a3b;
}
.quick {
  padding-left: 26px; display: grid; align-items: center; white-space: nowrap;
  grid-template-columns: 156px 103px 99px 52px 50px 44px 30px 59px 15px;
}
.lights { display: flex; gap: 16px; }
.lights i { width: 24px; height: 24px; border-radius: 50%; background: #ed6a5e; border: 1px solid #ce5347; }
.lights .yellow { background: #f5bf4f; border-color: #d6a243; }
.lights .green { background: #61c554; border-color: #58a942; }
.autosave { font-size: 21.500px; color: #6d9b7a; }
.toggle { width: 76px; height: 28px; border-radius: 14px; background: #326341; color: #a5c0ad; font-size: 16px; display: flex; align-items: center; gap: 6px; }
.toggle i { width: 26px; height: 26px; border-radius: 50%; background: #a3c0ac; }
.dim { color: #82a98e; }
.doc { margin-left: 817px; display: flex; align-items: center; gap: 15px; color: #e4eee7; font-size: 26px; letter-spacing: .5px; white-space: nowrap; }
.doc span { padding-top: 4px; }
.find span { padding-top: 2px; }
.find { margin-left: auto; width: 360px; height: 38px; border-radius: 7px; background: #2f5f3d; display: flex; align-items: center; padding-left: 11px; gap: 8px; color: #89a992; font-size: 24px; }
.smile { margin-left: 26px; }

.ribbon { height: 210px; flex: none; background: linear-gradient(#f6f6f6, #f2f2f2 60%, #ededed); border-bottom: 2px solid #cbcbcb; }
.tabs { height: 58px; display: flex; align-items: flex-start; justify-content: space-between; padding: 8px 20px 0 22px; }
.tabs nav { display: flex; gap: 46.300px; font-size: 26px; font-weight: 500; color: #262626; }
.tabs nav span { height: 48px; line-height: 46px; position: relative; }
.tabs nav .on::after { content: ""; position: absolute; left: 0; right: -1px; bottom: 0; height: 6px; border-radius: 3px; background: #2f7145; }
.share { display: flex; gap: 20px; }
.share button { width: 114px; height: 48px; border: 2px solid #d6d6d6; border-radius: 8px; background: #fff; padding: 0 0 0 15px; display: flex; align-items: center; gap: 9px; font: bold 24px/1 Roboto, "Noto Sans CJK SC"; color: #2f7145; white-space: nowrap; }

.groups { display: flex; padding-top: 21px; font-size: 21px; color: #1c1c1c; white-space: nowrap; }
.group { height: 124px; border-right: 2px solid #d2d2d2; flex: none; color: #333; }
.group span { color: #161616; }
.clip { width: 266px; display: flex; }
.font { width: 612px; }
.align { width: 324px; }
.wrap { width: 226px; }
.num { width: 352px; }
.styles { width: 830px; display: flex; padding-left: 16px; }
.cellops { width: 338px; display: flex; gap: 10px; padding-left: 22px; }
.edit { width: 412px; display: flex; padding-left: 26px; border-right: 0; }
.big { width: 90px; text-align: center; line-height: 23px; }
.w100 { width: 100px; }
.clip .big { width: 126px; }
.clip .big svg { margin-left: 34px; }
.clip .big span { margin-left: 8px; }
.stack { margin-top: -9px; }
.stack div { height: 40px; display: flex; align-items: center; gap: 11px; }
.stack div :nth-child(3) { margin-left: 3px; }
.edit .stack { width: 165px; }
.edit .stack div { gap: 13px; }
.row { display: grid; align-items: center; }
.row > span { padding-top: 1px; }
.r1 { height: 48px; }
.r2 { height: 40px; margin-top: 19px; }
.font .r1 { padding-left: 20px; grid-template-columns: 359px 125px 52px 28px; }
.font .r2 { padding-left: 35px; grid-template-columns: 54px 49px 40px 35px 25px 47px 34px 25px 46px 30px 47px 35px 23px 48px 12px; font-size: 25px; }
.font .r2 > * { justify-self: start; }
.font .it { font-family: "Liberation Serif", serif; font-size: 28px; margin-left: 2px; }
.align .r1 { padding-left: 30px; grid-template-columns: 53px 41px 65px 24px 47px 12px; }
.align .r2 { padding-left: 30px; grid-template-columns: 53px 52px 54px 27px 52px 29px; }
.wrap .r1 { padding-left: 28px; grid-template-columns: 40px auto; }
.wrap .r2 { padding-left: 24px; grid-template-columns: 44px 118px 12px; }
.num .r1 { padding-left: 20px; grid-template-columns: 309px; }
.num .r2 { padding-left: 27px; grid-template-columns: 47px 31px 61px 47px 25px 52px 31px; }
.sep { width: 2px; height: 36px; background: #d0d0d0; }
.row > .pressed { width: 48px; height: 48px; padding: 0; background: #c3c3c3; border-radius: 7px; display: grid; place-items: center; }
.select { height: 48px; border: 2px solid #bcbcbc; border-radius: 7px; background: #fff; display: flex; align-items: center; justify-content: space-between; padding: 2px 6px 0 10px; font-size: 24px; color: #111; width: 353px; }
.select.size { width: 106px; }
.num .select { width: 309px; }
.gallery { margin: 4px 0 0 5px; width: 586px; height: 116px; background: #fff; border: 2px solid #bdbdbd; border-radius: 8px; display: flex; align-items: center; gap: 16px; padding-left: 35px; }
.cells { display: grid; grid-template-columns: 168px 168px 168px; grid-template-rows: 40px 40px; gap: 14px 4px; font-size: 24px; }
.cells span { padding-left: 9px; line-height: 38px; }
.cells .normal { background: #fff; border: solid #5b9a6f; border-width: 2px; border-radius: 7px; margin: -8px -2px -6px; line-height: 52px; box-shadow: inset 0 6px #bdd5c4, inset 0 -6px #bdd5c4; }
.cells .bad { background: #f5c6cb; color: #a3201c; }
.cells .good { background: #ceecce; color: #2d6b1f; }
.cells .neutral { background: #fbe7a0; color: #9c6412; }
.cells .calc { background: #f2f2f2; color: #ea7d26; border: 3px solid #7f7f7f; font-weight: bold; padding-left: 6px; line-height: 33px; }
.cells .check { background: #a5a5a5; color: #fff; border: 6px double #3f3f3f; font-weight: bold; padding-left: 3px; line-height: 27px; }

/* formula bar */
.formula { height: 58px; flex: none; background: #fefefe; display: flex; align-items: center; padding-bottom: 4px; border-bottom: 2px solid #a4a4a4; box-shadow: inset 0 -4px #ececec, inset 0 -6px #a9a9a9; }
.namebox { width: 171px; height: 49px; border: 2px solid #b2b2b2; border-bottom: 0; display: flex; align-items: center; justify-content: space-between; padding: 4px 8px 0 18px; font-size: 25px; color: #333; margin-right: 28px; }
.formula > svg + svg { margin-left: 32px; }
.fx { font: italic 32px "Liberation Serif"; color: #333; margin-left: 34px; width: 43px; }
.bar { width: 2px; height: 30px; background: #d8d8d8; }
.formula .drop { margin: 0 8px 0 auto !important; }

/* grid headers */
.colheads { height: 44px; flex: none; display: flex; background: linear-gradient(#fdfdfd, #f5f5f5); border-bottom: 2px solid #b8b8b8; overflow: hidden; }
.colheads span { width: 130px; flex: none; text-align: center; font-size: 24px; line-height: 46px; color: #5c5c5c; border-right: 2px solid #dcdcdc; }
.colheads .corner { width: 46px; padding: 10px 0 0 10px; border-color: #b8b8b8; }
.colheads .on { color: #2f7145; background: #f0f0f0; box-shadow: inset 0 -4px #2f7145; }
.sheet { height: 1452px; flex: none; display: flex; background: #c9c9c9; overflow: hidden; }
.rowheads { width: 45px; background: linear-gradient(90deg, #f6f6f6, #fdfdfd); border-right: 2px solid #b8b8b8; flex: none; }
.rowheads span { display: block; height: 32px; line-height: 34px; text-align: center; font-size: 22px; color: #555; border-bottom: 2px solid #dcdcdc; }
.rowheads .on { color: #2f7145; background: #ededed; }
.canvas { flex: 1; position: relative; margin-left: -45px; }

/* floating objects on the sheet */
.chart, .slicer, .cursor { position: absolute; }
.chart { background: radial-gradient(circle farthest-corner, #595959, #575757 10%, #262626); font-family: Lato, sans-serif; fill: #dedede; font-size: 21px; }
.chart text { stroke: #dedede; stroke-width: .4px; }
#revQuarter { left: 66px; top: 22px; }
#qtyQuarter { left: 1792px; top: 22px; }
#revCountry { left: 66px; top: 480px; }
#qtyCountry { left: 2008px; top: 480px; }
.chart .title { font-size: 29px; font-weight: bold; fill: #f4f4f4; text-anchor: middle; letter-spacing: 2.500px; text-shadow: 0 3px 4px #000a; font-family: Lato, "Noto Sans CJK SC"; }
.chart .mid { text-anchor: middle; }
.chart .end { text-anchor: end; }
.chart .country { font-size: 21.900px; }
.chart .grid { stroke: #fff; stroke-opacity: .1; stroke-width: 2; }
.chart .axis { stroke: #aaa; stroke-width: 2; }
.chart .line { fill: none; stroke-width: 6; stroke-linejoin: round; stroke-linecap: round; filter: drop-shadow(0 3px 3px #0008); }
.chart .bars { filter: drop-shadow(0 3px 3px #0009); }
.cursor { left: 43px; top: 1342px; width: 134px; height: 36px; border: 4px solid #2f7145; box-shadow: inset 0 0 0 2px #fff; }
.cursor::after { content: ""; position: absolute; right: -6px; bottom: -6px; width: 11px; height: 11px; background: #2f7145; border: solid #fff; border-width: 2px 0 0 2px; }

.slicer { width: 288px; background: #fff; border: 1.500px solid #4472c4; padding: 0 6px; overflow: hidden; font-family: "Noto Sans", sans-serif; color: #111; }
#retailer { left: 1314px; top: 479px; height: 413px; }
#order { left: 1318px; top: 966px; height: 376px; }
#product { left: 1626px; top: 479px; height: 863px; }
.slicer header { height: 38px; border-bottom: 2px solid #4472c4; display: flex; align-items: center; font-size: 21px; font-weight: bold; white-space: nowrap; color: #000; letter-spacing: .35px; }
.slicer header span { width: 192px; padding: 0 0 2px; overflow: visible; }
.slicer .items { display: flex; flex-direction: column; gap: 4px; padding: 6px 5px 0 7px; }
#product .items { padding-right: 33px; height: 813px; overflow: hidden; }
.slicer .items span { height: 40px; flex: none; border: 2px solid #979797; border-radius: 7px; background: #b6c5e5; line-height: 37px; padding-left: 12px; font-size: 21px; letter-spacing: .2px; white-space: nowrap; }
.slicer .items span:nth-child(19) { height: 14px; line-height: 14px; overflow: hidden; }
.slicer .thumb { position: absolute; right: 12px; top: 45px; width: 18px; height: 690px; border-radius: 9px; background: #bababa; }

/* sheet tabs and status bar */
.sheettabs { height: 54px; flex: none; background: #f0f0f0; border-top: 2px solid #cfcfcf; border-bottom: 2px solid #9e9e9e; display: flex; font-size: 26px; color: #595959; white-space: nowrap; }
.arrows { margin: 15px 30px 0 29px; }
.sheettabs span { height: 41px; border-left: 2px solid #cdcdcd; display: grid; place-items: center; letter-spacing: .2px; }
.sheettabs span:last-child { border-right: 2px solid #cdcdcd; }
.sheettabs .on { margin-top: -2px; height: 45px; background: #fff; border: 0; border-radius: 0 0 7px 7px; color: #2f7145; box-shadow: 0 2px 2px #999; }
.status { height: 44px; flex: none; background: linear-gradient(#e1e1e1, #cecece); display: flex; align-items: center; padding-left: 2724px; }
.view { width: 74px; height: 44px; display: grid; place-items: center; background: #9c9c9c; margin-right: 21px; }
.status svg + svg { margin-left: 43px; }
.minus { width: 16px; height: 4px; background: #5d5d5d; margin: 0 16px 0 38px; }
.zoom { width: 196px; height: 8px; border-radius: 4px; background: #989898; margin-right: 16px; display: flex; align-items: center; justify-content: center; }
.zoom i { width: 22px; height: 22px; border-radius: 50%; background: #fff; box-shadow: 0 1px 3px #0008; }
.status .pct { font-size: 26px; margin-left: 34px; padding-top: 2px; color: #505050; }

/* dock */
.dock { width: 3216px; height: 108px; margin: 20px 0 0 72px; padding-left: 6px; border-radius: 12px 12px 0 0; background: linear-gradient(90deg, #77645a, #7a665a 40%, #6d5a50 75%, #715b50); display: flex; font-family: "Noto Sans", "Noto Sans CJK SC", sans-serif; }
.app { width: 89.300px; height: 108px; flex: none; position: relative; }
.app svg { width: 89px; height: 108px; filter: drop-shadow(0 2px 2px #0006); }
.run::after { content: ""; position: absolute; left: 41px; bottom: 4px; width: 8px; height: 8px; border-radius: 50%; background: #000; }
.rule { width: 2px; height: 80px; margin: 14px 18px 0 20px; background: #3f2e26; flex: none; }
.rule.short { height: 52px; margin: 28px 17px 0 20px; }
```
FILE: app.js
```js
const byId = id => document.getElementById(id);
const range = n => [...Array(n).keys()];

byId('cols').insertAdjacentHTML('beforeend', [...'ABCDEFGHIJKLMNOPQRSTUVWXYZ'].map(c => `<span class="${c === 'A' ? 'on' : ''}">${c}</span>`).join(''));
byId('rows').innerHTML = range(46).map(i => `<span class="${i === 42 ? 'on' : ''}">${i + 1}</span>`).join('');

const quarters = ['Q1 2012', 'Q1 2013', 'Q1 2014', 'Q2 2012', 'Q2 2013', 'Q2 2014', 'Q3 2012', 'Q3 2013', 'Q3 2014', 'Q4 2012', 'Q4 2013'];

function lineChart(id, title, labels, max, step, exp, color) {
  const y = v => 375 - v / max * 294;
  const x = i => 180.5 + i * 110.95;
  let s = `<text class="title" x="685" y="45">${title}</text>`;
  for (let i = 0; i <= max / step; i++) {
    s += `<path class="grid" d="M125 ${y(i * step)}H1347"/><text class="end" x="103" y="${y(i * step) + 6}">${i}.00E+${i ? exp : '00'}</text>`;
  }
  const values = labels.map(l => +l.replace(/,/g, ''));
  s += `<polyline class="line" stroke="${color}" points="${values.map((v, i) => x(i) + ',' + y(v)).join(' ')}"/>`;
  labels.forEach((l, i) => {
    s += `<text class="mid" x="${x(i)}" y="${y(values[i]) + 8}">${l}</text><text class="mid" x="${x(i)}" y="412">${quarters[i]}</text>`;
  });
  byId(id).innerHTML = s;
}
lineChart('revQuarter', 'Total Revenue per Quarter', ['293228460.5', '344124267.1', '471624367.7', '278180760', '391874462.5', '479269923.8', '281079667', '378118012.5', '166441982.6', '306706702.7', '381774358.8'], 6e8, 1e8, '08', '#4a72c0');
lineChart('qtyQuarter', 'Total Quantity per Quarter', ['6,258,427', '6,094,787', '8,382,882', '5,579,643', '6,783,135', '8,344,594', '5,556,853', '6,467,989', '2,868,410', '6,129,762', '6,595,879'], 9e6, 1e6, '06', '#e08344');

const countries = ['United States', 'United Kingdom', 'Switzerland', 'Sweden', 'Spain', 'Singapore', 'Netherlands', 'Mexico', 'Korea', 'Japan', 'Italy', 'Germany', 'France', 'Finland', 'Denmark', 'China', 'Canada', 'Brazil', 'Belgium', 'Austria', 'Australia'];

function barChart(id, title, labels, unit, fill, prefix) {
  const y = i => 96.5 + i * 36.37;
  let bars = '', text = '';
  let s = `<text class="title" x="577" y="45">${title}</text>`;
  range(7).forEach(i => { s += `<path class="grid" d="M${327 + i * 134} 79V843"/>`; });
  labels.forEach((l, i) => {
    const w = +l.replace(/,/g, '') * unit;
    bars += `<rect x="194" y="${y(i) - 8.5}" width="${w}" height="17" fill="${fill}"/>`;
    const tx = Math.min(194 + w + 11, prefix ? 1012 : 9999);
    text += `<text class="end country" x="170" y="${y(i) + 6.5}">${countries[i]}</text><text x="${tx}" y="${y(i) + 8}">${prefix}${l}</text>`;
  });
  byId(id).innerHTML = s + `<g class="bars">${bars}</g><path class="axis" d="M193 79V843"/>${text}`;
}
barChart('revCountry', '汇总', ['650,810,961', '219,223,088', '100,731,876', '80,635,525', '136,763,769', '156,261,814', '148,936,396', '139,369,605', '158,574,133', '281,665,499', '154,630,773', '200,773,663', '219,523,642', '152,221,983', '47,898,532', '248,823,217', '246,887,665', '109,065,671', '96,958,570', '113,366,616', '109,299,969'], 1.335e-6, 'url(#gBar)', '$');
barChart('qtyCountry', 'Total Quantity per Country', ['11,849,269', '4,050,932', '1,822,191', '1,403,596', '2,527,950', '2,849,009', '2,687,404', '2,547,117', '2,932,353', '5,137,596', '2,852,400', '3,733,677', '4,044,378', '2,786,800', '962,099', '4,596,986', '4,419,144', '1,957,452', '1,799,021', '2,102,206', '2,000,781'], 6.68e-5, '#e08344', '');

const slicerIcons = '<svg width="72" height="24" viewBox="0 0 72 24"><path d="m1 4 3 3 4-5M1 12l3 3 4-5M1 20l3 3 4-5" fill="none" stroke="#a5d096" stroke-width="2"/><path d="M11 4h14M11 12h14M11 20h14" stroke="#333" stroke-width="1.800"/><path d="M48 2h18l-7 8v11l-5-3v-8z" fill="#bdbdbd"/><path d="m61 13 9 9m0-9-9 9" stroke="#a8a8a8" stroke-width="3"/></svg>';
function slicer(id, title, items, extra = '') {
  byId(id).innerHTML = `<header><span>${title}</span>${slicerIcons}</header><div class="items">${items.map(t => `<span>${t}</span>`).join('')}</div>${extra}`;
}
slicer('retailer', 'Retailer type', ['Department Store', 'Direct Marketing', 'Equipment Rental⋯', 'Eyewear Store', 'Golf Shop', 'Outdoors Shop', 'Sports Store', 'Warehouse Store']);
slicer('order', 'Order method type', ['E-mail', 'Fax', 'Mail', 'Sales visit', 'Special', 'Telephone', 'Web']);
slicer('product', 'Product type', ['Binoculars', 'Climbing⋯', 'Cooking Gear', 'Eyewear', 'First Aid', 'Golf Accessories', 'Insect Repellents', 'Irons', 'Knives', 'Lanterns', 'Navigation', 'Packs', 'Putters', 'Rope', 'Safety', 'Sleeping Bags', 'Sunscreen', 'Tents', 'Tools'], '<i class="thumb"></i>');
```
